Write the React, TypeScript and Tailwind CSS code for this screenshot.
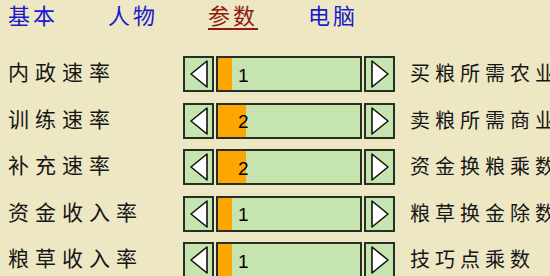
import React from "react";

const TABS = [
  { label: "基本", active: false },
  { label: "人物", active: false },
  { label: "参数", active: true },
  { label: "电脑", active: false },
];

const ROWS = [
  { label: "内政速率", value: 1, note: "买粮所需农业" },
  { label: "训练速率", value: 2, note: "卖粮所需商业" },
  { label: "补充速率", value: 2, note: "资金换粮乘数" },
  { label: "资金收入率", value: 1, note: "粮草换金除数" },
  { label: "粮草收入率", value: 1, note: "技巧点乘数" },
];

const CJK = "font-['Noto_Sans_CJK_SC','Noto_Sans',sans-serif]";

function Arrow({ dir }: { dir: "left" | "right" }) {
  return (
    <div className="w-[31px] h-9 shrink-0 border-2 border-[#243024] bg-[#C5E4AE] flex items-center justify-center">
      <svg width="22" height="30" viewBox="0 0 22 30">
        {dir === "left"
          ? <polygon points="19,2 3,15 19,28" fill="#fff" stroke="#111" strokeWidth="1.6" strokeLinejoin="round" />
          : <polygon points="3,2 19,15 3,28" fill="#fff" stroke="#111" strokeWidth="1.6" strokeLinejoin="round" />}
      </svg>
    </div>
  );
}

function Slider({ value }: { value: number }) {
  return (
    <div className="flex items-center gap-[2px] shrink-0">
      <Arrow dir="left" />
      <div className="relative w-[146px] h-9 border-2 border-[#243024] bg-[#C5E4AE] flex items-center">
        <div className="absolute left-0 top-0 bottom-0 bg-[#FFA500]" style={{ width: value * 14 }} />
        <span className="relative ml-[20px] text-[19px] text-black font-['Liberation_Sans',Arial,sans-serif] leading-none pt-[2px]">{value}</span>
      </div>
      <Arrow dir="right" />
    </div>
  );
}

export default function App() {
  return (
    <div className={`w-[550px] h-[276px] overflow-hidden bg-[#EDE7C4] ${CJK}`}>
      {/* Tabs */}
      <div className="flex pl-[8px] pt-[1px] h-[56px]">
        {TABS.map(t => (
          <div key={t.label} className="w-[100px]">
            <span className={`inline-block text-[22px] leading-[27px] tracking-[3px] ${
              t.active ? "text-[#8E1B12] border-b-2 border-[#8E1B12]" : "text-[#1A1ACB]"
            }`}>{t.label}</span>
          </div>
        ))}
      </div>

      {/* Rows */}
      <div className="flex flex-col gap-[10.5px]">
        {ROWS.map(r => (
          <div key={r.label} className="flex items-center">
            <span className="w-[183px] shrink-0 pl-[8px] text-[21px] tracking-[6px] text-[#161616] whitespace-nowrap -mt-[4px]">{r.label}</span>
            <Slider value={r.value} />
            <span className="ml-[15px] shrink-0 text-[20px] tracking-[5px] text-[#161616] whitespace-nowrap -mt-[2px]">{r.note}</span>
          </div>
        ))}
      </div>
    </div>
  );
}
